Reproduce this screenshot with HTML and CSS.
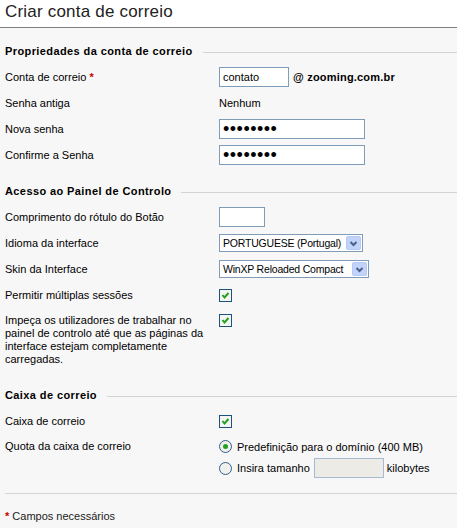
FILE: index.html
```html
<!DOCTYPE html>
<html>
<head>
	<title>Criar conta de correio</title>
	<meta charset="utf-8">
	<link rel="stylesheet" href="styles.css">
</head>

<body>
	<div class="page-head">
		<h1>Criar conta de correio</h1>
	</div>

	<div class="form">
		<!-- mail account -->
		<div class="section">
			<h2 class="section-title"><span>Propriedades da conta de correio</span></h2>
			<div class="row">
				<label class="lb">Conta de correio <span class="req">*</span></label>
				<div class="field">
					<input type="text" class="txt txt-name" value="contato">
					<b class="domain">@ zooming.com.br</b>
				</div>
			</div>
			<div class="row">
				<label class="lb">Senha antiga</label>
				<div class="field">Nenhum</div>
			</div>
			<div class="row">
				<label class="lb">Nova senha</label>
				<div class="field"><input type="password" class="txt txt-pass" value="password"></div>
			</div>
			<div class="row">
				<label class="lb">Confirme a Senha</label>
				<div class="field"><input type="password" class="txt txt-pass" value="password"></div>
			</div>
		</div>

		<!-- control panel -->
		<div class="section">
			<h2 class="section-title"><span>Acesso ao Painel de Controlo</span></h2>
			<div class="row">
				<label class="lb">Comprimento do rótulo do Botão</label>
				<div class="field"><input type="text" class="txt txt-short" value=""></div>
			</div>
			<div class="row">
				<label class="lb">Idioma da interface</label>
				<div class="field">
					<div class="select sel-lang">
						<span class="sel-text">PORTUGUESE (Portugal)</span>
						<span class="sel-btn"><svg width="13" height="13" viewBox="0 0 13 13"><path d="M3.5 5 L6.5 8 L9.5 5" fill="none" stroke="#4d6185" stroke-width="2"/></svg></span>
					</div>
				</div>
			</div>
			<div class="row">
				<label class="lb">Skin da Interface</label>
				<div class="field">
					<div class="select sel-skin">
						<span class="sel-text">WinXP Reloaded Compact</span>
						<span class="sel-btn"><svg width="13" height="13" viewBox="0 0 13 13"><path d="M3.5 5 L6.5 8 L9.5 5" fill="none" stroke="#4d6185" stroke-width="2"/></svg></span>
					</div>
				</div>
			</div>
			<div class="row">
				<label class="lb">Permitir múltiplas sessões</label>
				<div class="field">
					<span class="check"><svg width="11" height="11" viewBox="0 0 11 11"><path d="M2.5 5 L4.5 7.5 L8.5 3" fill="none" stroke="#21a121" stroke-width="2"/></svg></span>
				</div>
			</div>
			<div class="row row-top">
				<label class="lb lb-wrap">Impeça os utilizadores de trabalhar no painel de controlo até que as páginas da interface estejam completamente carregadas.</label>
				<div class="field">
					<span class="check"><svg width="11" height="11" viewBox="0 0 11 11"><path d="M2.5 5 L4.5 7.5 L8.5 3" fill="none" stroke="#21a121" stroke-width="2"/></svg></span>
				</div>
			</div>
		</div>

		<!-- mailbox -->
		<div class="section section-last">
			<h2 class="section-title"><span>Caixa de correio</span></h2>
			<div class="row">
				<label class="lb">Caixa de correio</label>
				<div class="field">
					<span class="check"><svg width="11" height="11" viewBox="0 0 11 11"><path d="M2.5 5 L4.5 7.5 L8.5 3" fill="none" stroke="#21a121" stroke-width="2"/></svg></span>
				</div>
			</div>
			<div class="row row-top">
				<label class="lb">Quota da caixa de correio</label>
				<div class="field quota">
					<div class="opt">
						<span class="radio on"><span class="dot"></span></span>
						<span>Predefinição para o domínio (400 MB)</span>
					</div>
					<div class="opt opt-size">
						<span class="radio"></span>
						<span>Insira tamanho</span>
						<input type="text" class="txt txt-size" disabled>
						<span>kilobytes</span>
					</div>
				</div>
			</div>
		</div>

		<div class="footer"><span class="req">*</span> Campos necessários</div>
	</div>
</body>
</html>
```

FILE: styles.css
```css
body{
	margin: 0;
	font-family: 'Liberation Sans', Arial, sans-serif;
	font-size: 11px;
	color: #000;
	background: #f8f7f7;
}

.page-head{
	background: #fff;
	border-bottom: 1px solid #808080;
	height: 27px;
}

h1{
	margin: 0;
	padding: 1px 0 0 5px;
	font-size: 17px;
	font-weight: normal;
	line-height: 21px;
	letter-spacing: 0.2px;
	color: #222;
}

.form{
	padding: 0 0 0 5px;
}

.section{
	margin-bottom: 8px;
}

.section-title{
	display: flex;
	align-items: center;
	height: 26px;
	margin: 10px 0 0 0;
	font-size: 11px;
	font-weight: bold;
	letter-spacing: 0.4px;
}

.section-title::after{
	content: "";
	flex: 1;
	height: 1px;
	margin-left: 10px;
	margin-top: 2px;
	background: #d4d4d4;
}

.row{
	display: grid;
	grid-template-columns: 214px 1fr;
	align-items: center;
	min-height: 26px;
}

.row-top{
	align-items: start;
	padding: 6px 0;
}

.lb{
	line-height: 13px;
}

.lb-wrap{
	width: 200px;
}

.req{
	color: #c00;
	font-weight: bold;
}

.field{
	display: flex;
	align-items: center;
}

.txt{
	box-sizing: border-box;
	height: 20px;
	border: 1px solid #7f9db9;
	background: #fff;
	padding: 1px 3px;
	font-family: 'Liberation Sans', Arial, sans-serif;
	font-size: 11px;
	margin: 0;
}

.txt-name{
	width: 70px;
}

.txt-pass{
	width: 146px;
	font-size: 18px;
	line-height: 16px;
	padding: 0 3px;
	letter-spacing: 0.5px;
}

.txt-short{
	width: 46px;
}

.txt-size{
	width: 70px;
	background: #ecebe6;
	border-color: #a7bad0;
	margin: 0 3px 0 4px;
}

.domain{
	margin-left: 4px;
	letter-spacing: 0.2px;
}

.select{
	box-sizing: border-box;
	display: flex;
	align-items: center;
	height: 18px;
	border: 1px solid #7f9db9;
	background: #fff;
	padding: 0 1px 0 3px;
	white-space: nowrap;
	overflow: hidden;
}

.sel-lang{
	width: 144px;
}

.sel-skin{
	width: 150px;
}

.sel-text{
	flex: 1;
	min-width: 0;
	font-size: 10.5px;
	letter-spacing: -0.2px;
	overflow: hidden;
}

.sel-btn{
	display: flex;
	flex: none;
	width: 15px;
	height: 14px;
	background: #c1d3fb;
	border: 1px solid #b5c9f5;
	border-radius: 2px;
	box-sizing: border-box;
	align-items: center;
	justify-content: center;
}

.check{
	box-sizing: border-box;
	display: flex;
	width: 13px;
	height: 13px;
	border: 1px solid #1c5180;
	background: #f4f4f0;
}

.quota{
	flex-direction: column;
	align-items: flex-start;
	gap: 5px;
}

.opt{
	display: flex;
	align-items: center;
	height: 13px;
}

.opt-size{
	height: 20px;
}

.radio{
	box-sizing: border-box;
	display: flex;
	align-items: center;
	justify-content: center;
	width: 13px;
	height: 13px;
	border: 1px solid #2f5f8c;
	border-radius: 50%;
	background: #f0f0ec;
	margin-right: 5px;
}

.radio .dot{
	width: 5px;
	height: 5px;
	border-radius: 50%;
	background: #21a121;
}

.section-last{
	border-bottom: 1px solid #d4d4d4;
	padding-bottom: 9px;
	margin-bottom: 0;
}

.footer{
	padding: 16px 0;
	color: #222;
}
```
